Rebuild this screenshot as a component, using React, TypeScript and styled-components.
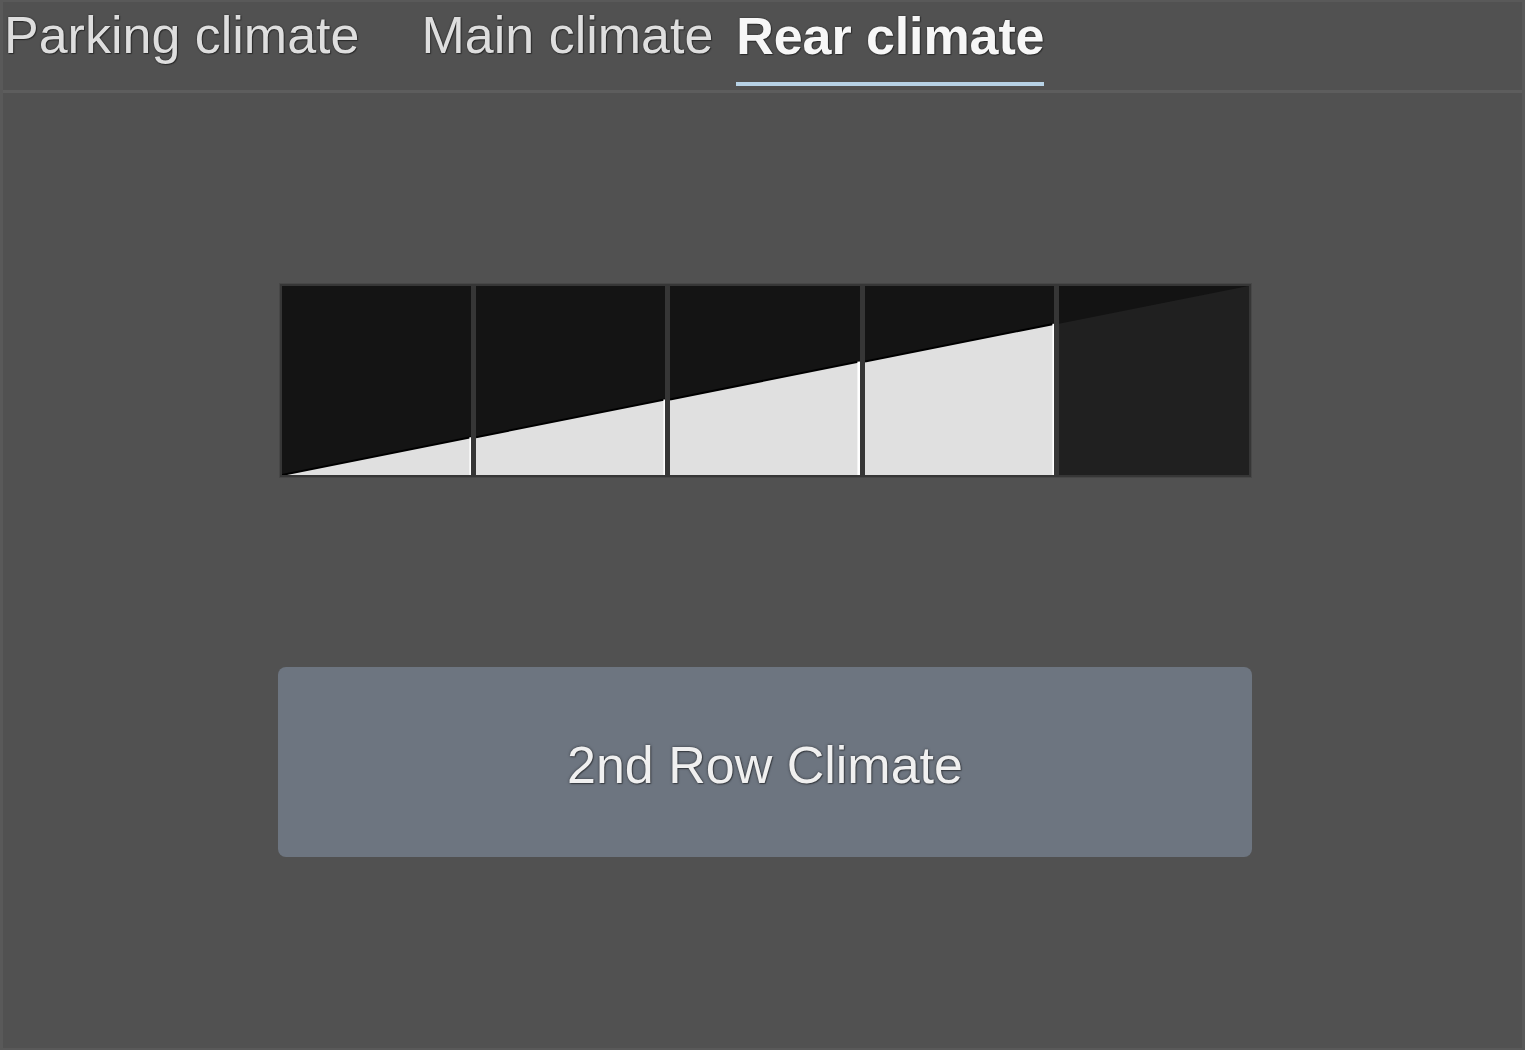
import React, { useState } from 'react';
import styled, { createGlobalStyle, css } from 'styled-components';

const GlobalStyle = createGlobalStyle`
  html, body {
    margin: 0;
    padding: 0;
    background: #515151;
  }
  * {
    box-sizing: border-box;
  }
`;

const Screen = styled.div`
  width: 1525px;
  height: 1050px;
  display: flex;
  flex-direction: column;
  background: #515151;
  border: 2px solid #595959;
  border-left-width: 3px;
  border-right-width: 3px;
  font-family: 'Liberation Sans', Arial, sans-serif;
  overflow: hidden;
`;

const TabBar = styled.div`
  flex: 0 0 auto;
  height: 91px;
  display: flex;
  align-items: flex-start;
  padding-top: 4px;
  padding-left: 1px;
  border-bottom: 3px solid #5d5d5d;
`;

const Tab = styled.button<{ $active: boolean; $gap: number }>`
  background: none;
  border: none;
  padding: 0 0 16px 0;
  margin: 0 ${({ $gap }) => $gap}px 0 0;
  font-family: inherit;
  font-size: 52px;
  line-height: 58px;
  color: #dedede;
  font-weight: 400;
  text-shadow: 0 0 2px rgba(0, 0, 0, 0.55), 1px 1px 1px rgba(0, 0, 0, 0.4);
  border-bottom: 4px solid transparent;
  cursor: pointer;
  ${({ $active }) =>
    $active &&
    css`
      color: #f7f7f7;
      font-weight: 700;
      letter-spacing: -0.1px;
      border-bottom-color: #b7d2e6;
      padding-top: 1px;
      padding-bottom: 17px;
    `}
`;

const Body = styled.div`
  flex: 1;
  display: flex;
  flex-direction: column;
  align-items: center;
  justify-content: space-evenly;
  padding-left: 5px;
`;

const Meter = styled.div`
  width: 971px;
  height: 193px;
  display: flex;
  gap: 5px;
  padding: 2px;
  background: #363636;
  box-shadow: 0 0 0 1px #474747;
`;

const Cell = styled.div<{ $on: boolean }>`
  flex: 1;
  background: ${({ $on }) => ($on ? '#141414' : '#202020')};
  overflow: hidden;

  svg {
    display: block;
    width: 100%;
    height: 100%;
  }
`;

const ActionButton = styled.button`
  width: 974px;
  height: 190px;
  border: none;
  border-radius: 8px;
  background: #6d7580;
  color: #f0f0f0;
  font-family: 'Liberation Sans', Arial, sans-serif;
  font-size: 52px;
  text-shadow: 0 0 3px rgba(0, 0, 0, 0.55), 1px 1px 1px rgba(0, 0, 0, 0.35);
  cursor: pointer;
  padding-top: 6px;
`;

const tabs = [
  { label: 'Parking climate', gap: 62 },
  { label: 'Main climate', gap: 23 },
  { label: 'Rear climate', gap: 0 },
];

const LEVELS = 5;

const MeterCell: React.FC<{ index: number; on: boolean }> = ({ index, on }) => {
  const left = 100 - (index / LEVELS) * 100;
  const right = 100 - ((index + 1) / LEVELS) * 100;

  return (
    <Cell $on={on}>
      <svg viewBox="0 0 100 100" preserveAspectRatio="none">
        {on ? (
          <>
            <polygon points={`0,${left} 100,${right} 100,100 0,100`} fill="#e0e0e0" />
            <line
              x1="0"
              y1={left}
              x2="100"
              y2={right}
              stroke="#000"
              strokeWidth="2"
              vectorEffect="non-scaling-stroke"
            />
            <line
              x1="100"
              y1={right}
              x2="100"
              y2="100"
              stroke="#fff"
              strokeWidth="4"
              vectorEffect="non-scaling-stroke"
            />
          </>
        ) : (
          <polygon points={`0,0 100,0 100,${right} 0,${left}`} fill="#131313" />
        )}
      </svg>
    </Cell>
  );
};

const App: React.FC = () => {
  const [active, setActive] = useState(2);
  const level = 4;

  return (
    <>
      <GlobalStyle />
      <Screen>
        <TabBar>
          {tabs.map((t, i) => (
            <Tab key={t.label} $active={active === i} $gap={t.gap} onClick={() => setActive(i)}>
              {t.label}
            </Tab>
          ))}
        </TabBar>
        <Body>
          <Meter>
            {Array.from({ length: LEVELS }).map((_, i) => (
              <MeterCell key={i} index={i} on={i < level} />
            ))}
          </Meter>
          <ActionButton>2nd Row Climate</ActionButton>
        </Body>
      </Screen>
    </>
  );
};

export default App;
